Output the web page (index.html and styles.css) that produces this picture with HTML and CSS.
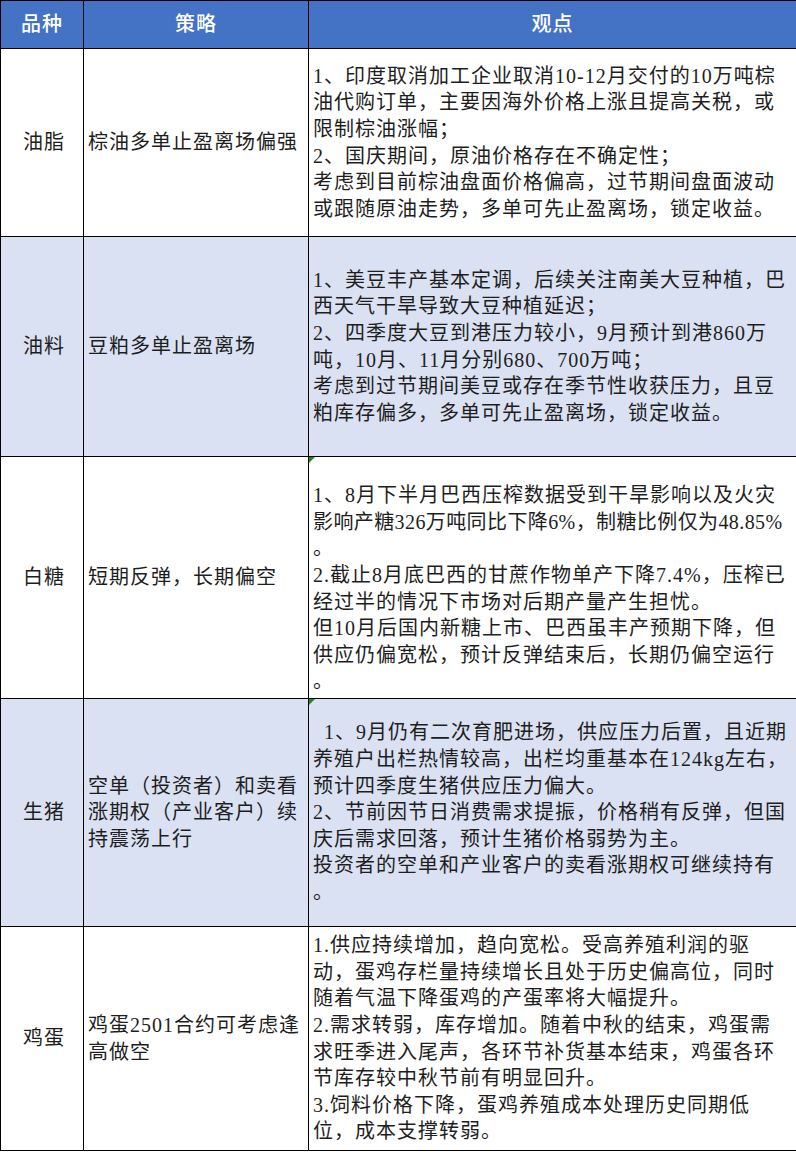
FILE: index.html
```html
<!DOCTYPE html>
<html lang="zh-CN">
<head>
<meta charset="utf-8">
<title>策略观点</title>
<link rel="stylesheet" href="styles.css">
</head>
<body>
<table class="grid">
  <colgroup>
    <col class="c1">
    <col class="c2">
    <col class="c3">
  </colgroup>
  <thead>
    <tr class="head">
      <th>品种</th>
      <th>策略</th>
      <th>观点</th>
    </tr>
  </thead>
  <tbody>
    <tr class="r1">
      <td class="kind">油脂</td>
      <td class="plan">棕油多单止盈离场偏强</td>
      <td class="view">1、印度取消加工企业取消10-12月交付的10万吨棕<br>油代购订单，主要因海外价格上涨且提高关税，或<br>限制棕油涨幅；<br>2、国庆期间，原油价格存在不确定性；<br>考虑到目前棕油盘面价格偏高，过节期间盘面波动<br>或跟随原油走势，多单可先止盈离场，锁定收益。</td>
    </tr>
    <tr class="r2 alt">
      <td class="kind">油料</td>
      <td class="plan">豆粕多单止盈离场</td>
      <td class="view">1、美豆丰产基本定调，后续关注南美大豆种植，巴<br>西天气干旱导致大豆种植延迟；<br>2、四季度大豆到港压力较小，9月预计到港860万<br>吨，10月、11月分别680、700万吨；<br>考虑到过节期间美豆或存在季节性收获压力，且豆<br>粕库存偏多，多单可先止盈离场，锁定收益。</td>
    </tr>
    <tr class="r3">
      <td class="kind">白糖</td>
      <td class="plan">短期反弹，长期偏空</td>
      <td class="view flag low">1、8月下半月巴西压榨数据受到干旱影响以及火灾<br><span class="tight">影响产糖326万吨同比下降6%，制糖比例仅为48.85%</span><br>。<br>2.截止8月底巴西的甘蔗作物单产下降7.4%，压榨已<br>经过半的情况下市场对后期产量产生担忧。<br>但10月后国内新糖上市、巴西虽丰产预期下降，但<br>供应仍偏宽松，预计反弹结束后，长期仍偏空运行<br>。</td>
    </tr>
    <tr class="r4 alt">
      <td class="kind">生猪</td>
      <td class="plan">空单（投资者）和卖看<br>涨期权（产业客户）续<br>持震荡上行</td>
      <td class="view flag"><span class="indent">1、9月仍有二次育肥进场，供应压力后置，且近期</span><br>养殖户出栏热情较高，出栏均重基本在124kg左右，<br>预计四季度生猪供应压力偏大。<br>2、节前因节日消费需求提振，价格稍有反弹，但国<br>庆后需求回落，预计生猪价格弱势为主。<br>投资者的空单和产业客户的卖看涨期权可继续持有<br>。</td>
    </tr>
    <tr class="r5">
      <td class="kind">鸡蛋</td>
      <td class="plan">鸡蛋2501合约可考虑逢<br>高做空</td>
      <td class="view">1.供应持续增加，趋向宽松。受高养殖利润的驱<br>动，蛋鸡存栏量持续增长且处于历史偏高位，同时<br>随着气温下降蛋鸡的产蛋率将大幅提升。<br>2.需求转弱，库存增加。随着中秋的结束，鸡蛋需<br>求旺季进入尾声，各环节补货基本结束，鸡蛋各环<br>节库存较中秋节前有明显回升。<br>3.饲料价格下降，蛋鸡养殖成本处理历史同期低<br>位，成本支撑转弱。</td>
    </tr>
  </tbody>
</table>
</body>
</html>
```

FILE: styles.css
```css
html, body {
  margin: 0;
  padding: 0;
  background: #ffffff;
}

.grid {
  border-collapse: collapse;
  table-layout: fixed;
  width: 796px;
  font-family: "Liberation Serif", "Noto Sans CJK SC", serif;
  font-size: 20px;
  letter-spacing: 1px;
  color: #1e1e1e;
}

.c1 { width: 83px; }
.c2 { width: 225px; }
.c3 { width: 488px; }

.grid th,
.grid td {
  border: 1px solid #000;
  padding: 0 0 0 4px;
  vertical-align: middle;
  line-height: 26.6px;
  white-space: nowrap;
  overflow: hidden;
}

.head {
  height: 48px;
  background: #4472c4;
}

.head th {
  color: #ffffff;
  font-weight: 500;
  text-align: center;
  padding: 0;
}

.r1 { height: 188px; }
.r2 { height: 220px; }
.r3 { height: 242px; }
.r4 { height: 228px; }
.r5 { height: 224px; }

.alt { background: #d9e1f2; }

.kind {
  text-align: center;
  padding: 0;
}

.plan {
  text-align: left;
}

.view {
  text-align: left;
}

.grid td.low {
  padding-top: 22px;
}

.tight {
  letter-spacing: 0.4px;
}

.flag {
  position: relative;
}

.flag::before {
  content: "";
  position: absolute;
  left: 0;
  top: 0;
  width: 0;
  height: 0;
  border-top: 6px solid #1f8a1f;
  border-right: 6px solid transparent;
}

.indent {
  padding-left: 11px;
}
```
